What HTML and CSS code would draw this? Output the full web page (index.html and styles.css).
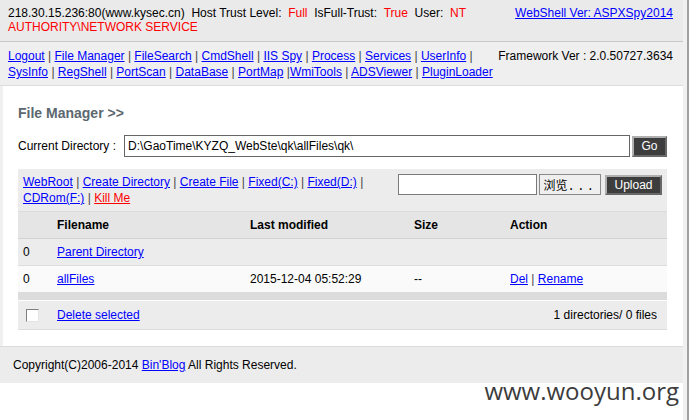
FILE: index.html
```html
<!DOCTYPE html>
<html>
<head>
<meta charset="utf-8">
<title>ASPXSpy</title>
<link rel="stylesheet" href="styles.css">
</head>
<body>
<div class="page">
  <div class="header">
    <div class="hleft">218.30.15.236:80(www.kysec.cn)&nbsp;&nbsp;Host Trust Level:&nbsp;&nbsp;<span class="red">Full</span>&nbsp;&nbsp;IsFull-Trust:&nbsp;&nbsp;<span class="red">True</span>&nbsp;&nbsp;User:&nbsp;&nbsp;<span class="red">NT</span> <span class="red">AUTHORITY\NETWORK SERVICE</span></div>
    <div class="hright"><a href="#">WebShell Ver: ASPXSpy2014</a></div>
  </div>
  <div class="nav">
    <div class="nleft"><a href="#">Logout</a> <span class="sep">|</span> <a href="#">File Manager</a> <span class="sep">|</span> <a href="#">FileSearch</a> <span class="sep">|</span> <a href="#">CmdShell</a> <span class="sep">|</span> <a href="#">IIS Spy</a> <span class="sep">|</span> <a href="#">Process</a> <span class="sep">|</span> <a href="#">Services</a> <span class="sep">|</span> <a href="#">UserInfo</a> <span class="sep">|</span> <a href="#">SysInfo</a> <span class="sep">|</span> <a href="#">RegShell</a> <span class="sep">|</span> <a href="#">PortScan</a> <span class="sep">|</span> <a href="#">DataBase</a> <span class="sep">|</span> <a href="#">PortMap</a> <span class="sep">|</span><a href="#">WmiTools</a> <span class="sep">|</span> <a href="#">ADSViewer</a> <span class="sep">|</span> <a href="#">PluginLoader</a></div>
    <div class="nright">Framework Ver : 2.0.50727.3634</div>
  </div>
  <div class="main">
    <h2 class="title">File Manager &gt;&gt;</h2>
    <div class="dirrow">
      <span class="lbl">Current Directory :</span>
      <input class="dirinput" type="text" value="D:\GaoTime\KYZQ_WebSte\qk\allFiles\qk\">
      <button class="bt go">Go</button>
    </div>
    <table class="files">
      <colgroup><col class="c1"><col class="c2"><col class="c3"><col class="c4"><col class="c5"></colgroup>
      <tr class="tools">
        <td colspan="5">
          <div class="toolrow">
            <div class="links"><a href="#">WebRoot</a> <span class="sep">|</span> <a href="#">Create Directory</a> <span class="sep">|</span> <a href="#">Create File</a> <span class="sep">|</span> <a href="#">Fixed(C:)</a> <span class="sep">|</span> <a href="#">Fixed(D:)</a> <span class="sep">|</span> <a href="#">CDRom(F:)</a> <span class="sep">|</span> <a href="#" class="kill">Kill Me</a></div>
            <div class="upload">
              <input class="fileinput" type="text" value="">
              <button class="browse">浏览<span class="dots">...</span></button>
              <button class="bt up">Upload</button>
            </div>
          </div>
        </td>
      </tr>
      <tr class="head">
        <td></td><td>Filename</td><td>Last modified</td><td>Size</td><td>Action</td>
      </tr>
      <tr class="alt1">
        <td>0</td><td><a href="#">Parent Directory</a></td><td></td><td></td><td></td>
      </tr>
      <tr class="alt2">
        <td>0</td><td><a href="#">allFiles</a></td><td>2015-12-04 05:52:29</td><td>--</td><td><a href="#">Del</a> <span class="sep">|</span> <a href="#">Rename</a></td>
      </tr>
      <tr class="bar"><td colspan="5"></td></tr>
      <tr class="foot">
        <td><input type="checkbox" class="chk"></td><td><a href="#">Delete selected</a></td><td colspan="3" class="count">1 directories/ 0 files</td>
      </tr>
    </table>
  </div>
  <div class="footer">Copyright(C)2006-2014 <a href="#">Bin'Blog</a> All Rights Reserved.</div>
  <div class="watermark">www.wooyun.org</div>
</div>
<div class="edge"></div>
</body>
</html>
```

FILE: styles.css
```css
html, body {
  margin: 0;
  padding: 0;
  height: 100%;
}
body {
  display: flex;
  background: #fff;
  color: #000;
  font: 12px "Liberation Sans", Arial, sans-serif;
  overflow: hidden;
}
a {
  color: #0000ff;
  text-decoration: underline;
}
.red { color: #ff0000; }
.sep { color: #444; }

.page {
  flex: 0 0 683px;
  width: 683px;
  position: relative;
}
.edge {
  flex: 0 0 4px;
  background: #f0f0f0;
  border-right: 2px solid #a0a0a0;
}

.header {
  display: flex;
  justify-content: space-between;
  background: #eaeaea;
  border-bottom: 1px solid #c8c8c8;
  padding: 6px 10px 7px 8px;
  line-height: 14px;
  height: 28px;
}
.hleft { flex: 0 0 490px; width: 490px; }
.hright { flex: 0 0 auto; }

.nav {
  display: flex;
  justify-content: space-between;
  background: #efefef;
  border-bottom: 1px solid #dddddd;
  padding: 6px 10px 5px 8px;
  line-height: 16px;
  height: 32px;
}
.nleft { flex: 0 0 490px; width: 490px; }
.nright { flex: 0 0 auto; white-space: nowrap; }

.main {
  border-left: 3px solid #f0f0f0;
  padding: 15px 16px 16px 15px;
  background: #fff;
}
.title {
  margin: 0 0 10px;
  font-size: 14px;
  line-height: 24px;
  height: 24px;
  color: #5b686f;
  font-weight: bold;
}
.dirrow {
  display: flex;
  align-items: center;
  height: 22px;
  margin-bottom: 12px;
}
.lbl { width: 106px; flex: 0 0 106px; }
.dirinput {
  box-sizing: border-box;
  width: 506px;
  height: 22px;
  margin: 0;
  border: 1px solid #666;
  padding: 0 3px;
  font: 12px "Liberation Sans", Arial, sans-serif;
  color: #000;
  background: #fff;
}
.bt {
  box-sizing: border-box;
  background: #3d3d3d;
  color: #fff;
  font: 12px "Liberation Sans", Arial, sans-serif;
  border: 2px solid;
  border-color: #b0b0b0 #686868 #686868 #b0b0b0;
  padding: 0;
  margin: 0;
}
.go { width: 35px; height: 21px; margin-left: 2px; }

.files {
  width: 100%;
  border-collapse: collapse;
  table-layout: fixed;
}
.c1 { width: 34px; }
.c2 { width: 193px; }
.c3 { width: 164px; }
.c4 { width: 96px; }
.files td {
  padding: 5px 10px 5px 5px;
  line-height: 16px;
  border-bottom: 1px solid #dddddd;
  text-align: left;
  vertical-align: middle;
}
.tools td {
  background: #ececec;
  padding: 5px;
  border-bottom: 1px solid #dcdcdc;
}
.toolrow {
  display: flex;
  align-items: flex-start;
}
.links { flex: 1; }
.kill { color: #ff0000; }
.upload {
  display: flex;
  align-items: flex-start;
}
.fileinput {
  box-sizing: border-box;
  width: 139px;
  height: 21px;
  margin: 0;
  border: 1px solid #7a7a7a;
  background: #fff;
  padding: 0 2px;
}
.browse {
  box-sizing: border-box;
  width: 62px;
  height: 21px;
  margin: 0 0 0 2px;
  border: 1px solid #8a8a8a;
  background: #efefef;
  color: #000;
  padding: 0;
  font: 12px "Noto Sans CJK SC", "Liberation Sans", sans-serif;
}
.dots { letter-spacing: 2.5px; font-family: "Liberation Mono", monospace; }
.up { width: 57px; height: 20px; margin: 1px 0 0 4px; }

.head td {
  background: #e5e5e5;
  font-weight: bold;
  border-bottom: 1px solid #d2d2d2;
}
.alt1 td { background: #ececec; }
.alt2 td { background: #fafafa; border-bottom: 0; }
.bar td {
  height: 8px;
  padding: 0;
  background: #dcdcdc;
  border-bottom: 1px solid #fff;
}
.foot td {
  background: #ececec;
  padding-top: 6px;
  padding-bottom: 6px;
}
.foot td.count { text-align: right; }
.chk {
  -webkit-appearance: none;
  appearance: none;
  display: block;
  box-sizing: border-box;
  width: 13px;
  height: 13px;
  margin: 2px 0 1px 3px;
  background: #fff;
  border: 1px solid;
  border-color: #808080 #e4e4e4 #e4e4e4 #808080;
}

.footer {
  background: #ececec;
  border-top: 1px solid #dddddd;
  padding: 10px 13px;
  line-height: 16px;
}

.watermark {
  position: absolute;
  right: 4px;
  top: 379px;
  font: 24px/24px "Open Sans", "Noto Sans", sans-serif;
  color: #3c3c3c;
}
```
